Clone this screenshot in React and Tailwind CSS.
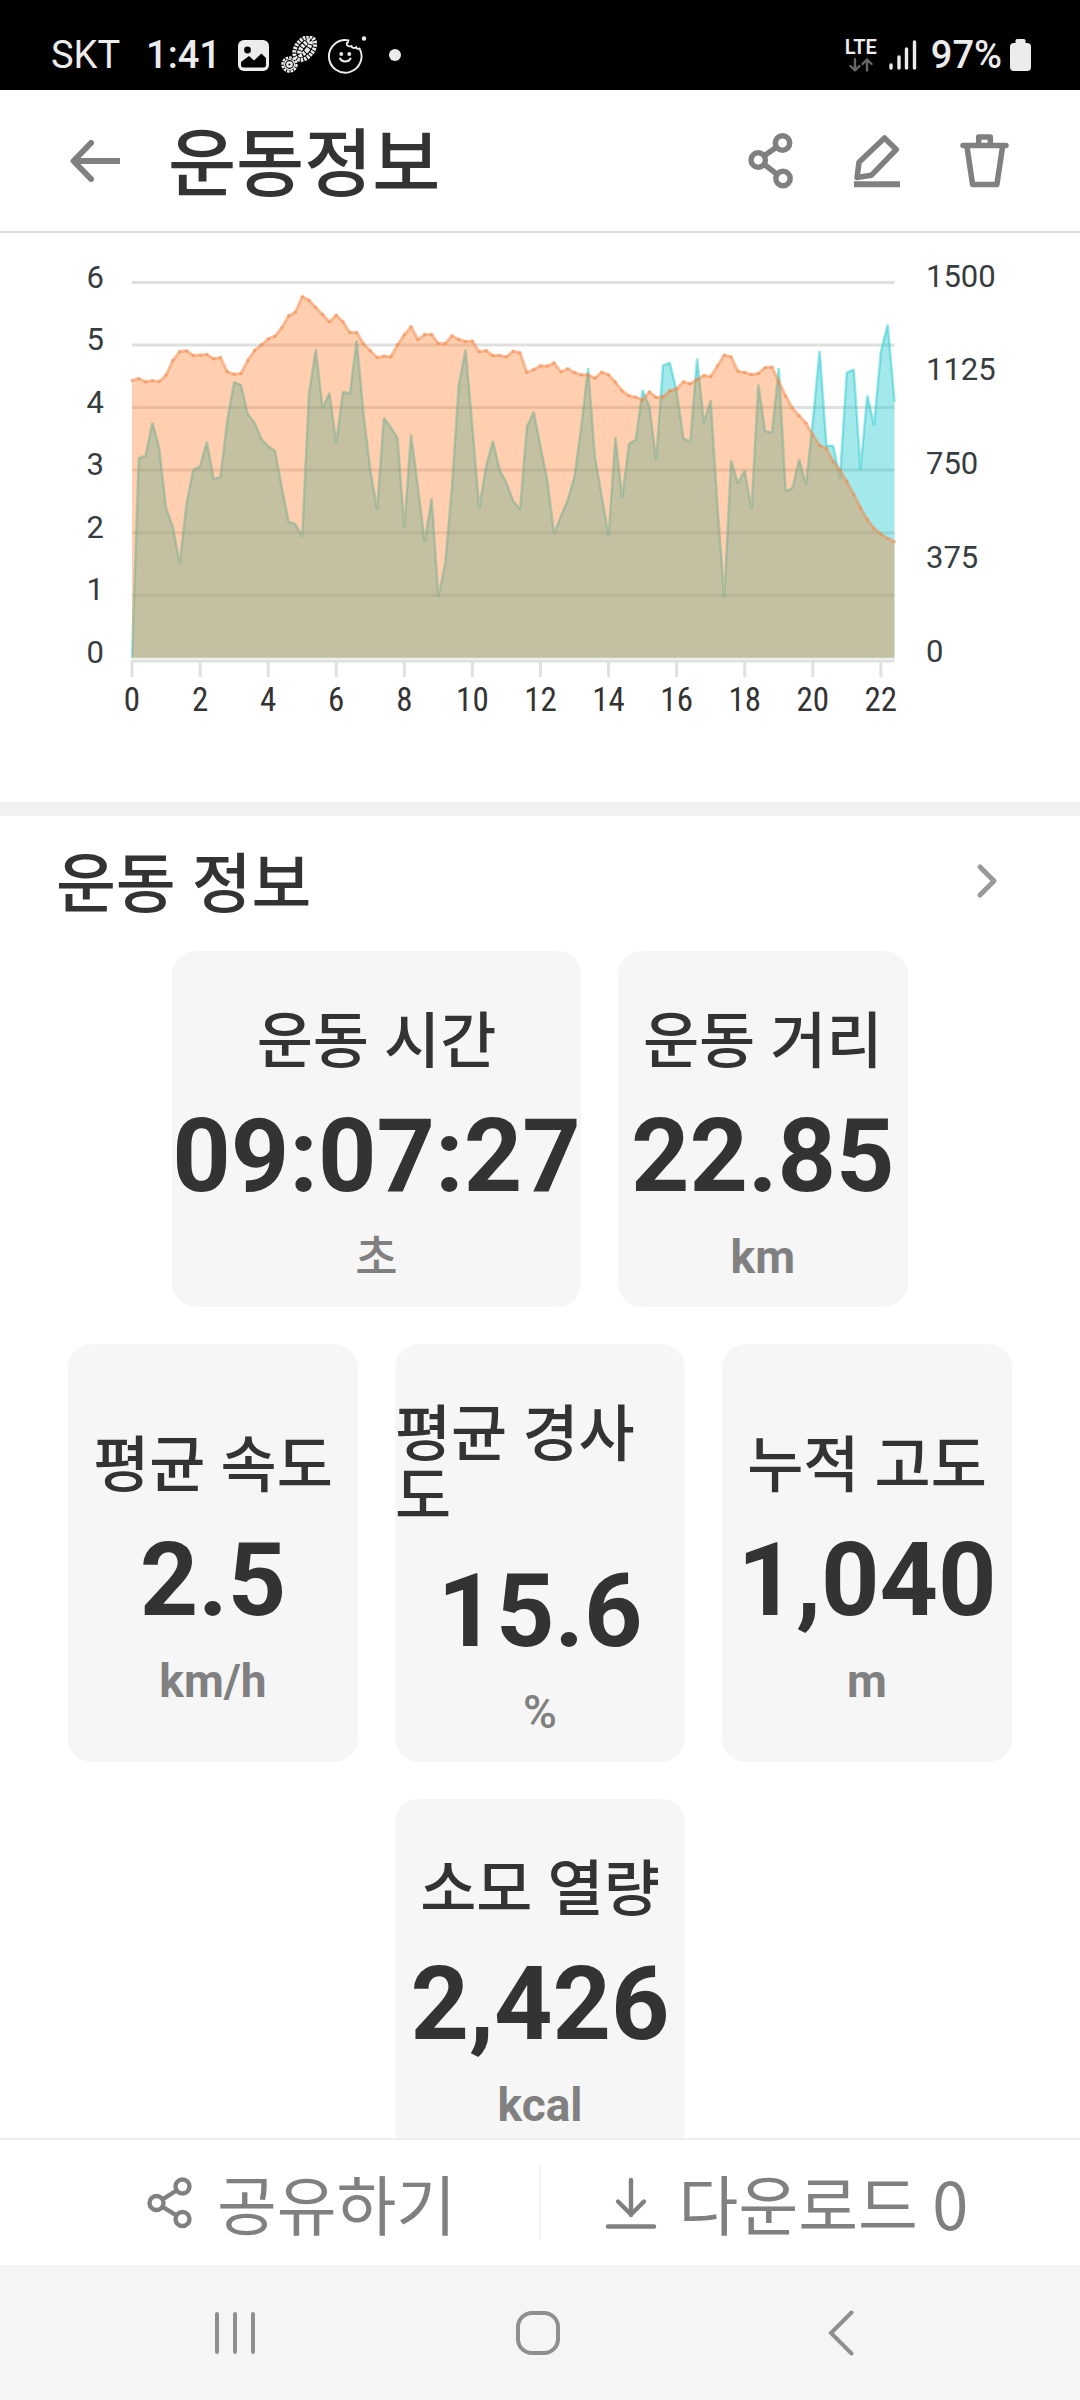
const SANS = "font-['Roboto','Noto_Sans_CJK_KR',sans-serif]";

// Vertical positions on the plot grid: 127 is the top grid line, 1253 the base line.
const GRID_TOP = 127;
const GRID_BASE = 1253;

const ALTITUDE = [
  421, 415, 425, 422, 424, 405, 361, 334, 332, 346, 345, 343, 356, 352, 395, 402, 400, 361, 331, 314,
  296, 288, 263, 227, 216, 169, 180, 202, 223, 245, 225, 245, 277, 277, 311, 332, 352, 348, 350, 314,
  284, 259, 299, 283, 283, 310, 310, 287, 298, 304, 303, 335, 331, 346, 346, 350, 333, 338, 397, 388,
  377, 378, 368, 395, 386, 397, 404, 404, 414, 396, 404, 426, 452, 467, 471, 479, 455, 472, 470, 452,
  446, 425, 431, 418, 406, 409, 377, 345, 350, 393, 397, 403, 400, 382, 381, 424, 467, 504, 527, 549,
  584, 616, 625, 664, 690, 724, 763, 803, 838, 865, 882, 895, 905,
];

const SPEED = [
  1253, 654, 647, 547, 625, 803, 860, 972, 790, 689, 678, 605, 718, 710, 540, 426, 434, 522, 547, 597,
  619, 632, 742, 845, 852, 890, 460, 328, 505, 458, 609, 455, 461, 301, 520, 690, 808, 533, 561, 593,
  862, 583, 740, 906, 775, 1070, 970, 740, 435, 328, 560, 805, 680, 603, 690, 728, 783, 808, 560, 515,
  620, 720, 881, 828, 780, 710, 560, 384, 650, 770, 888, 591, 775, 611, 599, 450, 500, 661, 376, 368,
  455, 595, 605, 355, 548, 480, 800, 1073, 661, 730, 691, 808, 433, 573, 578, 384, 753, 744, 658, 734,
  545, 332, 617, 617, 716, 398, 388, 688, 466, 556, 335, 253, 485,
];

const PLOT = { left: 132, right: 894.5, top: 49.5, base: 424.7 };

const toX = (i) => PLOT.left + (i * (PLOT.right - PLOT.left)) / (SPEED.length - 1);
const toY = (v) =>
  PLOT.top + ((v - GRID_TOP) * (PLOT.base - PLOT.top)) / (GRID_BASE - GRID_TOP);
const toLine = (data) => data.map((v, i) => `${toX(i).toFixed(1)},${toY(v).toFixed(1)}`).join(" ");
const toArea = (data) => `${PLOT.left},${PLOT.base} ${toLine(data)} ${PLOT.right},${PLOT.base}`;

function WorkoutChart() {
  const step = (PLOT.base - PLOT.top) / 6;
  return (
    <svg viewBox="0 0 1080 569" className="block w-full" role="img" aria-label="속도 및 고도 그래프">
      <g stroke="#e0e0e0" strokeWidth="3">
        {[0, 1, 2, 3, 4, 5].map((n) => (
          <line key={n} x1={PLOT.left} x2={PLOT.right} y1={PLOT.top + n * step} y2={PLOT.top + n * step} />
        ))}
        <line x1={PLOT.left - 1} x2={PLOT.right} y1="428" y2="428" />
        {Array.from({ length: 12 }, (_, k) => (
          <line key={k} x1={toX(k * 10)} x2={toX(k * 10)} y1="428" y2="444" />
        ))}
      </g>
      <line x1={PLOT.left} x2={PLOT.right} y1="425.5" y2="425.5" stroke="#f0f0f0" strokeWidth="2" />

      <polygon points={toArea(SPEED)} fill="#19c8cd" fillOpacity="0.4" />
      <polyline points={toLine(SPEED)} fill="none" stroke="#19c8cd" strokeOpacity="0.45" strokeWidth="2.5" strokeLinejoin="bevel" />
      <polygon points={toArea(ALTITUDE)} fill="#ff7a24" fillOpacity="0.36" />
      <polyline points={toLine(ALTITUDE)} fill="none" stroke="#f58a4a" strokeOpacity="0.5" strokeWidth="3" strokeLinejoin="bevel" />
      <g fill="#f0803c" fillOpacity="0.4">
        {ALTITUDE.map((v, i) => (
          <circle key={i} cx={toX(i)} cy={toY(v)} r="1.7" />
        ))}
      </g>

      <g className={SANS} fill="#373d3f" fontSize="31">
        {[6, 5, 4, 3, 2, 1, 0].map((n, k) => (
          <text key={n} x="104" y={PLOT.top + k * step + 5} textAnchor="end">
            {n}
          </text>
        ))}
        {[1500, 1125, 750, 375, 0].map((n, k) => (
          <text key={n} x="926" y={PLOT.top + k * step * 1.5 + 4}>
            {n}
          </text>
        ))}
      </g>
      <g className="font-['Roboto_Condensed','Roboto',sans-serif]" fill="#333333" fontSize="33">
        {Array.from({ length: 12 }, (_, k) => (
          <text key={k} x={toX(k * 10)} y="478" textAnchor="middle">
            {k * 2}
          </text>
        ))}
      </g>
    </svg>
  );
}

function StatusBar() {
  return (
    <div className="flex h-[90px] shrink-0 items-center justify-between bg-black pl-[51px] pr-[49px] pt-5 text-[38px] leading-none text-[#ececec]">
      <div className="flex items-center">
        <span>SKT</span>
        <span className="ml-[26px] font-medium">1:41</span>
        <svg className="ml-[17px] h-[31px] w-[31px]" viewBox="0 0 31 31">
          <rect width="31" height="31" rx="6" fill="#ececec" />
          <circle cx="9.5" cy="10" r="3.4" fill="#000" />
          <path d="M3 22 11 16l5 4.5 7.5-7 4.5 4.5V25a2.5 2.5 0 0 1-2.5 2.5h-20A2.5 2.5 0 0 1 3 25z" fill="#000" />
        </svg>
        <svg className="ml-3 h-[38px] w-[38px]" viewBox="0 0 38 38" fill="none" stroke="#ececec">
          <g transform="rotate(38 24 12)">
            <ellipse cx="24" cy="12.5" rx="8.5" ry="13" strokeWidth="4" strokeDasharray="2.4 1" />
            <ellipse cx="24" cy="12" rx="3" ry="8.5" strokeWidth="4.4" strokeDasharray="2.6 1" />
          </g>
          <circle cx="8.5" cy="28.5" r="7" strokeWidth="2.4" strokeDasharray="2.6 1" />
          <circle cx="8.5" cy="28.5" r="5" strokeWidth="1.2" />
          <circle cx="8.5" cy="28.5" r="2.2" strokeWidth="2.2" />
        </svg>
        <svg className="ml-2 h-[38px] w-[40px]" viewBox="0 0 40 38" fill="none" stroke="#ececec" strokeWidth="1.9" strokeLinecap="round">
          <path d="M21.5 4.4A16.3 16.3 0 1 0 32.5 12.5c-1.5.8-3 .3-3.4-1.2-1.8 1.4-4.3.7-4.6-1.2-2 .8-4.4-.1-4.7-1.8-.2-1 .4-1.8 1.3-2.2" />
          <circle cx="14.3" cy="18" r="1" fill="#ececec" />
          <circle cx="22.3" cy="18" r="1" fill="#ececec" />
          <path d="M13 22.5c2 4 8.6 4 10.6 0" />
          <circle cx="37" cy="2.4" r="1.3" fill="#ececec" />
        </svg>
        <span className="ml-[22px] h-3 w-3 rounded-full bg-[#ececec]" />
      </div>
      <div className="flex items-center">
        <div className="flex flex-col items-center gap-0.5">
          <span className="text-[20px] font-semibold leading-[18px]">LTE</span>
          <svg className="h-[14px] w-[24px]" viewBox="0 0 24 14" fill="none" stroke="#666" strokeWidth="2.4" strokeLinecap="round" strokeLinejoin="round">
            <path d="M6 1.2v11M1.5 8 6 12.5 10.5 8M18 12.5v-11M13.5 6 18 1.5 22.5 6" />
          </svg>
        </div>
        <svg className="ml-3 h-[30px] w-[28px]" viewBox="0 0 28 30" stroke="#ececec" strokeWidth="3.4" strokeLinecap="round">
          <path d="M2 25v3M10 17v11M17.5 9v19M25.5 2v26" />
        </svg>
        <span className="ml-[14px] font-medium">97%</span>
        <svg className="ml-2 h-[32px] w-[21px]" viewBox="0 0 21 32" fill="#ececec">
          <rect x="5.5" width="10" height="8" rx="1.5" />
          <rect y="4" width="21" height="28" rx="4" />
        </svg>
      </div>
    </div>
  );
}

function Header() {
  return (
    <header className="flex h-[143px] shrink-0 items-center border-b-2 border-[#e0e0e0] pl-[70px] pr-[71px] text-[#808080]">
      <button type="button" aria-label="뒤로">
        <svg className="h-[42px] w-[50px]" viewBox="0 0 50 42" fill="none" stroke="currentColor" strokeWidth="6" strokeLinejoin="round">
          <path d="M4 21h46" />
          <path d="M21 3 3.5 21 21 39" strokeLinecap="round" />
        </svg>
      </button>
      <h1 className="ml-12 flex-1 pt-2 text-[74px] font-medium leading-[74px] text-[#333333]">운동정보</h1>
      <div className="flex items-center gap-[60px]">
        <button type="button" aria-label="공유">
          <svg className="h-[56px] w-[46px]" viewBox="0 0 46 56" fill="none" stroke="currentColor" strokeWidth="5.5">
            <circle cx="34.5" cy="10" r="7.2" />
            <circle cx="10.2" cy="27" r="7.2" />
            <circle cx="35" cy="45.5" r="7.2" />
            <path d="M16.2 22.8 28.5 14.2M16 31.3l13 9.8" />
          </svg>
        </button>
        <button type="button" aria-label="편집">
          <svg className="h-[54px] w-[46px]" viewBox="0 0 46 54" fill="none" stroke="currentColor" strokeWidth="5.5" strokeLinejoin="round">
            <path d="M30.5 4 42.3 15.5 17.3 41.3 3 43.5 5 28.3z" />
            <path d="M0 50.2h46" strokeWidth="6" />
          </svg>
        </button>
        <button type="button" aria-label="삭제">
          <svg className="h-[54px] w-[49px]" viewBox="0 0 49 54" fill="none" stroke="currentColor" strokeWidth="5.5" strokeLinejoin="round">
            <path d="M3 11.5h43" strokeLinecap="round" />
            <path d="M18.7 11V3h11.6v8" />
            <path d="M7 13l5.6 37.5h24.3L42.5 13" />
          </svg>
        </button>
      </div>
    </header>
  );
}

const STATS = [
  { label: "운동 시간", value: "09:07:27", unit: "초", unitWeight: "font-medium" },
  { label: "운동 거리", value: "22.85", unit: "km", unitWeight: "font-bold" },
  { label: "평균 속도", value: "2.5", unit: "km/h", unitWeight: "font-bold" },
  { label: "평균 경사도", value: "15.6", unit: "%", unitWeight: "font-medium" },
  { label: "누적 고도", value: "1,040", unit: "m", unitWeight: "font-bold" },
  { label: "소모 열량", value: "2,426", unit: "kcal", unitWeight: "font-bold" },
];

function StatCard({ label, value, unit, unitWeight }) {
  return (
    <li className="flex w-min min-w-[290px] flex-col items-center justify-center rounded-3xl bg-[#f6f6f6] pb-[25px] pt-[60px]">
      <span className="text-[61px] font-medium leading-[62px] text-[#333333]">{label}</span>
      <strong className="mt-8 whitespace-nowrap text-[102px] font-bold leading-[102px] text-[#333333]">{value}</strong>
      <span className={`mt-[25px] text-[46px] leading-[50px] text-[#808080] ${unitWeight}`}>{unit}</span>
    </li>
  );
}

function ActionBar() {
  return (
    <div className="flex shrink-0 items-center border-t-2 border-[#eeeeee] bg-white py-[25px] font-['Noto_Sans_CJK_KR',sans-serif] text-[65px] leading-[75px] text-[#808080]">
      <button type="button" className="flex w-1/2 items-center justify-center gap-[24px] pl-[64px]">
        <svg className="h-[52px] w-[46px]" viewBox="0 0 46 52" fill="none" stroke="currentColor" strokeWidth="4.4">
          <circle cx="35.5" cy="9.5" r="7" />
          <circle cx="9.5" cy="26" r="7" />
          <circle cx="35.5" cy="42" r="7" />
          <path d="M15.5 22.3 29.5 13.5M15.5 29.8l14 8.6" />
        </svg>
        공유하기
      </button>
      <div className="h-[75px] w-0.5 bg-[#f3f3f3]" />
      <button type="button" className="flex w-1/2 items-center justify-center gap-[22px] pr-[48px]">
        <svg className="h-[52px] w-[52px]" viewBox="0 0 52 52" fill="none" stroke="currentColor" strokeWidth="4.4" strokeLinecap="round" strokeLinejoin="round">
          <path d="M26 3v35M13 24.5 26 37.5 39 24.5M3 49.5h46" />
        </svg>
        다운로드 0
      </button>
    </div>
  );
}

function SystemNav() {
  return (
    <nav className="grid h-[135px] shrink-0 grid-cols-3 bg-[#f5f5f5] pl-[84px] pr-[88px] text-[#8f8f8f]">
      <button type="button" aria-label="최근 앱" className="flex items-center justify-center">
        <svg className="h-[44px] w-[40px]" viewBox="0 0 40 44" stroke="currentColor" strokeWidth="4" strokeLinecap="round">
          <path d="M2 3v38M20 3v38M38 3v38" />
        </svg>
      </button>
      <button type="button" aria-label="홈" className="flex items-center justify-center">
        <svg className="h-[44px] w-[44px]" viewBox="0 0 44 44" fill="none" stroke="currentColor" strokeWidth="4">
          <rect x="2" y="2" width="40" height="40" rx="14" />
        </svg>
      </button>
      <button type="button" aria-label="뒤로 가기" className="flex items-center justify-center">
        <svg className="h-[46px] w-[26px]" viewBox="0 0 26 46" fill="none" stroke="currentColor" strokeWidth="4" strokeLinecap="round">
          <path d="M23.5 2.5 3 23l20.5 20.5" />
        </svg>
      </button>
    </nav>
  );
}

export default function App() {
  return (
    <div className="flex h-screen flex-col bg-white font-['Roboto','Noto_Sans_CJK_KR',sans-serif]">
      <StatusBar />
      <Header />
      <main className="min-h-0 flex-1 overflow-hidden">
        <section className="border-b-[14px] border-[#f1f2f4]">
          <WorkoutChart />
        </section>
        <section>
          <div className="flex items-start justify-between pb-[33px] pl-[56px] pr-[82px] pt-[37px]">
            <h2 className="text-[65px] font-medium leading-[65px] text-[#333333]">운동 정보</h2>
            <button type="button" aria-label="더 보기" className="py-2.5">
              <svg className="h-[36px] w-[22px]" viewBox="0 0 22 36" fill="none" stroke="#999999" strokeWidth="5" strokeLinecap="round" strokeLinejoin="round">
                <path d="M4 4l14 14L4 32" />
              </svg>
            </button>
          </div>
          <ul className="flex flex-wrap justify-center gap-[37px] px-[60px]">
            {STATS.map((s) => (
              <StatCard key={s.label} {...s} />
            ))}
          </ul>
        </section>
      </main>
      <ActionBar />
      <SystemNav />
    </div>
  );
}
